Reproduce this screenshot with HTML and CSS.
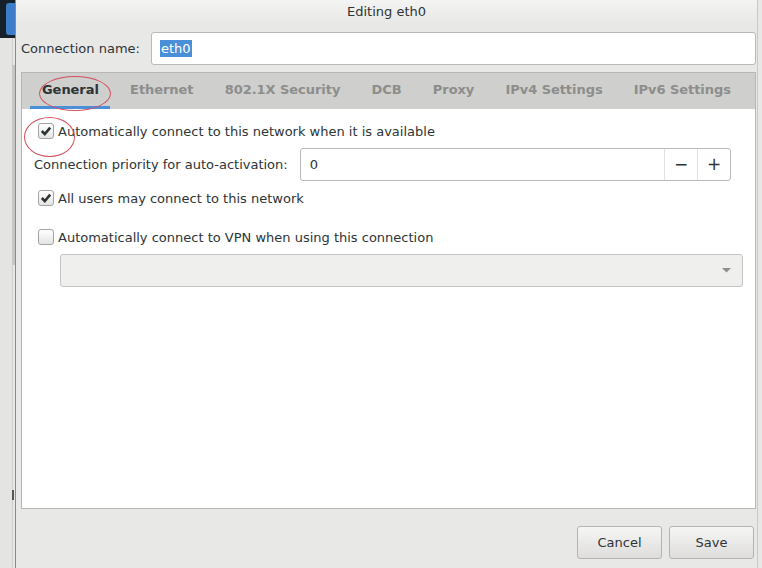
FILE: index.html
```html
<!DOCTYPE html>
<html lang="en">
<head>
  <meta charset="UTF-8">
  <title>Editing eth0</title>
  <link rel="stylesheet" href="styles.css">
</head>
<body>
  <div class="screen">
    <!-- window behind the dialog -->
    <div class="backdrop">
      <div class="backdrop-top"><div class="backdrop-btn"></div></div>
      <div class="backdrop-body">
        <div class="backdrop-scroll"></div>
        <div class="backdrop-mark"></div>
      </div>
    </div>

    <div class="dialog">
      <div class="titlebar">Editing eth0</div>

      <div class="dialog-body">
        <div class="name-row">
          <label class="name-label">Connection name:</label>
          <div class="entry name-entry"><span class="selected">eth0</span></div>
        </div>

        <div class="notebook">
          <div class="tabs">
            <div class="tab active">General</div>
            <div class="tab">Ethernet</div>
            <div class="tab">802.1X Security</div>
            <div class="tab">DCB</div>
            <div class="tab">Proxy</div>
            <div class="tab">IPv4 Settings</div>
            <div class="tab">IPv6 Settings</div>
          </div>

          <div class="page">
            <div class="check-row first">
              <span class="check on">
                <svg width="16" height="16" viewBox="0 0 16 16"><path d="M3.8 8 L6.8 11 L12.2 4.6" fill="none" stroke="#2e3436" stroke-width="2.6"/></svg>
              </span>
              <span>Automatically connect to this network when it is available</span>
            </div>

            <div class="priority-row">
              <span>Connection priority for auto-activation:</span>
              <div class="spin">
                <div class="spin-value">0</div>
                <div class="spin-btn">&minus;</div>
                <div class="spin-btn">+</div>
              </div>
            </div>

            <div class="check-row">
              <span class="check on">
                <svg width="16" height="16" viewBox="0 0 16 16"><path d="M3.8 8 L6.8 11 L12.2 4.6" fill="none" stroke="#2e3436" stroke-width="2.6"/></svg>
              </span>
              <span>All users may connect to this network</span>
            </div>

            <div class="check-row vpn">
              <span class="check"></span>
              <span>Automatically connect to VPN when using this connection</span>
            </div>

            <div class="combo">
              <svg width="9" height="5" viewBox="0 0 9 5"><path d="M0 0 L9 0 L4.5 4.5 Z" fill="#8b8e8f"/></svg>
            </div>
          </div>
        </div>

        <div class="actions">
          <button class="btn">Cancel</button>
          <button class="btn">Save</button>
        </div>
      </div>

      <!-- red annotation marks -->
      <div class="mark mark-tab"></div>
      <div class="mark mark-check"></div>
    </div>
  </div>
</body>
</html>
```

FILE: styles.css
```css
body {
  margin: 0;
  font-family: "DejaVu Sans", sans-serif;
  font-size: 13px;
  color: #2e3436;
}
.screen {
  display: flex;
  width: 762px;
  height: 568px;
  overflow: hidden;
  background: #e8e8e7;
}

/* background window */
.backdrop {
  width: 15px;
  display: flex;
  flex-direction: column;
  border-right: 1px solid #8a8a8a;
}
.backdrop-top {
  height: 38px;
  background: #16202a;
  padding: 3px 0 0 6px;
  box-sizing: border-box;
}
.backdrop-btn {
  height: 32px;
  background: #3d7cc9;
  border-radius: 3px 0 0 3px;
}
.backdrop-body {
  flex: 1;
  background: #e4e4e3;
  border-right: 1px solid #d0d0cf;
  margin-right: 2px;
  padding-top: 27px;
}
.backdrop-scroll {
  width: 3px;
  height: 200px;
  margin-left: 12px;
  background: #c6c6c5;
}
.backdrop-mark {
  width: 2px;
  height: 10px;
  margin: 225px 0 0 12px;
  background: #555;
}

/* dialog */
.dialog {
  flex: 1;
  position: relative;
  display: flex;
  flex-direction: column;
  border-right: 1px solid #c9c9c8;
  margin-right: 4px;
}
.titlebar {
  height: 24px;
  line-height: 23px;
  text-align: center;
  background: linear-gradient(#f4f4f3, #e8e8e7);
}
.dialog-body {
  flex: 1;
  display: flex;
  flex-direction: column;
  padding: 8px 1px 0 5px;
}
.name-row {
  display: flex;
  align-items: center;
}
.name-label {
  width: 130px;
}
.entry {
  height: 31px;
  border: 1px solid #b9b9b6;
  border-radius: 3px;
  background: #fff;
  display: flex;
  align-items: center;
}
.name-entry {
  flex: 1;
  padding-left: 8px;
}
.selected {
  background: #4a90d9;
  color: #fff;
  padding: 1px 1px;
}

/* notebook */
.notebook {
  flex: 1;
  margin-top: 7px;
  border: 1px solid #b6b6b3;
  display: flex;
  flex-direction: column;
}
.tabs {
  height: 36px;
  background: #cfcfcd;
  display: flex;
  padding-left: 4px;
}
.tab {
  position: relative;
  padding: 0 15.6px;
  line-height: 34px;
  font-weight: bold;
  color: #8d8d8c;
  letter-spacing: -0.05px;
}
.tab:first-child {
  padding-left: 16px;
}
.tab.active {
  color: #2e3436;
}
.tab.active::after {
  content: "";
  position: absolute;
  left: 4px;
  right: 4px;
  bottom: 0;
  height: 3px;
  background: #4a90d9;
}
.page {
  flex: 1;
  background: #fff;
  padding: 7px 12px 0 12px;
}
.check-row {
  height: 30px;
  display: flex;
  align-items: center;
  padding-left: 4px;
}
.check-row.vpn {
  margin-top: 9px;
}
.check {
  width: 16px;
  height: 16px;
  margin-right: 4px;
  border: 1px solid #a3a3a1;
  border-radius: 3px;
  background: linear-gradient(#ffffff, #e4e4e3);
  box-sizing: border-box;
  display: flex;
  align-items: center;
  justify-content: center;
}
.check svg {
  flex: none;
}
.priority-row {
  height: 33px;
  margin-top: 2px;
  margin-bottom: 2px;
  display: flex;
  align-items: center;
  gap: 12px;
}
.spin {
  flex: 1;
  margin-right: 12px;
  height: 31px;
  border: 1px solid #b9b9b6;
  border-radius: 3px;
  display: flex;
  overflow: hidden;
}
.spin-value {
  flex: 1;
  padding-left: 9px;
  line-height: 31px;
}
.spin-btn {
  width: 32px;
  border-left: 1px solid #e2e2e1;
  text-align: center;
  line-height: 31px;
  font-size: 17px;
}
.combo {
  margin: 2px 0 0 26px;
  height: 31px;
  border: 1px solid #c4c4c2;
  border-radius: 3px;
  background: #efefee;
  display: flex;
  align-items: center;
  justify-content: flex-end;
  padding-right: 11px;
}

/* buttons */
.actions {
  display: flex;
  justify-content: flex-end;
  gap: 7px;
  padding: 17px 2px 9px 0;
}
.btn {
  width: 85px;
  height: 33px;
  font-family: "DejaVu Sans", sans-serif;
  font-size: 13px;
  color: #2e3436;
  border: 1px solid #b3b3b1;
  border-radius: 3px;
  background: linear-gradient(#f6f6f5, #dedddc);
}

/* annotation ellipses */
.mark {
  position: absolute;
  border: 1px solid #d4505e;
  border-radius: 50%;
}
.mark-tab {
  left: 23px;
  top: 76px;
  width: 70px;
  height: 33px;
}
.mark-check {
  left: 8px;
  top: 117px;
  width: 49px;
  height: 38px;
}
```
